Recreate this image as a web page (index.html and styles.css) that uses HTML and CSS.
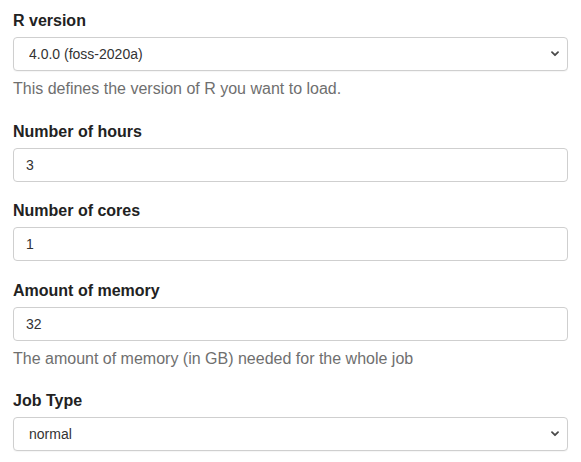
FILE: index.html
```html
<!DOCTYPE html>
<html>
<head>
<meta charset="utf-8">
<link rel="stylesheet" href="styles.css">
</head>
<body>
<form class="form">
  <div class="group">
    <label class="label">R version</label>
    <div class="select-wrap">
      <select class="control select"><option>4.0.0 (foss-2020a)</option></select>
      <svg class="chevron" width="8" height="6" viewBox="0 0 8 6"><path d="M1 1.2 L4 4.2 L7 1.2" fill="none" stroke="#4a4a4a" stroke-width="1.8" stroke-linecap="round" stroke-linejoin="round"/></svg>
    </div>
    <p class="help">This defines the version of R you want to load.</p>
  </div>
  <div class="group">
    <label class="label">Number of hours</label>
    <input class="control" type="text" value="3">
  </div>
  <div class="group">
    <label class="label">Number of cores</label>
    <input class="control" type="text" value="1">
  </div>
  <div class="group">
    <label class="label">Amount of memory</label>
    <input class="control" type="text" value="32">
    <p class="help">The amount of memory (in GB) needed for the whole job</p>
  </div>
  <div class="group">
    <label class="label">Job Type</label>
    <div class="select-wrap">
      <select class="control select"><option>normal</option></select>
      <svg class="chevron" width="8" height="6" viewBox="0 0 8 6"><path d="M1 1.2 L4 4.2 L7 1.2" fill="none" stroke="#4a4a4a" stroke-width="1.8" stroke-linecap="round" stroke-linejoin="round"/></svg>
    </div>
  </div>
</form>
</body>
</html>
```

FILE: styles.css
```css
html, body {
  margin: 0;
  padding: 0;
  background: #fff;
}
body {
  font-family: "Liberation Sans", Arial, Helvetica, sans-serif;
  font-size: 16px;
  color: #222;
}
.form {
  padding: 11px 13px 0 13px;
}
.group {
  display: flex;
  flex-direction: column;
  margin-bottom: 19.5px;
}
.label {
  display: block;
  font-weight: bold;
  font-size: 16px;
  line-height: 19px;
  margin-bottom: 7px;
  color: #222;
}
.control {
  display: block;
  box-sizing: border-box;
  width: 100%;
  height: 34px;
  margin: 0;
  padding: 0 12px;
  border: 1px solid #cfcfcf;
  border-radius: 4px;
  background: #fff;
  font-family: "Liberation Sans", Arial, Helvetica, sans-serif;
  font-size: 14px;
  color: #333;
  outline: none;
}
.select-wrap {
  position: relative;
}
.select {
  -webkit-appearance: none;
  appearance: none;
  padding-left: 15px;
  box-shadow: 0 1px 1px rgba(0,0,0,0.04);
}
.chevron {
  position: absolute;
  right: 9px;
  top: 14px;
  pointer-events: none;
}
.help {
  margin: 8px 0 0 0;
  padding-bottom: 3px;
  font-size: 16px;
  line-height: 20px;
  color: #6f6f6f;
}
```
